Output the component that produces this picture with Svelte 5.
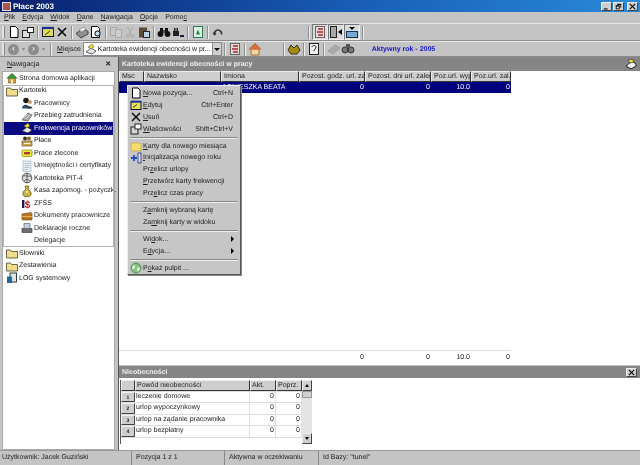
<script>
    const menus = [["Plik", 0], ["Edycja", 0], ["Widok", 0], ["Dane", 0], ["Nawigacja", 0], ["Opcje", 0], ["Pomoc", 4]];

    const columns = [
        { name: "Msc", width: 25 },
        { name: "Nazwisko", width: 77 },
        { name: "Imiona", width: 78 },
        { name: "Pozost. godz. url. zaległ", width: 66 },
        { name: "Pozost. dni url. zaległ", width: 66 },
        { name: "Poz.url. wyp.", width: 40 },
        { name: "Poz.url. zal.u", width: 40 }
    ];

    const treeItems = [
        { label: "Pracownicy", icon: "people" },
        { label: "Przebieg zatrudnienia", icon: "gear" },
        { label: "Frekwencja pracowników", icon: "hand", selected: true },
        { label: "Płace", icon: "money" },
        { label: "Prace zlecone", icon: "note" },
        { label: "Umiejętności i certyfikaty", icon: "doc" },
        { label: "Kartoteka PIT-4", icon: "globe" },
        { label: "Kasa zapomog. - pożyczk.", icon: "bag" },
        { label: "ZFŚS", icon: "dollar" },
        { label: "Dokumenty pracownicze", icon: "case" },
        { label: "Deklaracje roczne", icon: "print" },
        { label: "Delegacje", icon: "" }
    ];

    const reasons = [
        "leczenie domowe",
        "urlop wypoczynkowy",
        "urlop na żądanie pracownika",
        "urlop bezpłatny"
    ];

    const menuGroups = [
        [
            { label: "Nowa pozycja...", u: 0, key: "Ctrl+N", icon: "page" },
            { label: "Edytuj", u: 0, key: "Ctrl+Enter", icon: "edit" },
            { label: "Usuń", u: 0, key: "Ctrl+D", icon: "cross" },
            { label: "Właściwości", u: 0, key: "Shift+Ctrl+V", icon: "props" }
        ],
        [
            { label: "Karty dla nowego miesiąca", u: 0, icon: "folderplain" },
            { label: "Inicjalizacja nowego roku", u: 0, icon: "plus" },
            { label: "Przelicz urlopy", u: 2 },
            { label: "Przetwórz karty frekwencji", u: 0 },
            { label: "Przelicz czas pracy", u: 3 }
        ],
        [
            { label: "Zamknij wybraną kartę", u: 1 },
            { label: "Zamknij karty w widoku", u: 2 }
        ],
        [
            { label: "Widok...", u: 2, arrow: true },
            { label: "Edycja...", u: 1, arrow: true }
        ],
        [
            { label: "Pokaż pulpit ...", u: 1, icon: "desk" }
        ]
    ];
</script>

{#snippet mn(text, at)}{text.slice(0, at)}<u>{text[at]}</u>{text.slice(at + 1)}{/snippet}

{#snippet icon(name)}
    <svg class="ico" viewBox="0 0 12 12" width="12" height="12">
        {#if name === "people"}
            <circle cx="5" cy="3.5" r="2.8" fill="#1c1c1c" /><path d="M1 11.5c0-5 7-5 8 0z" fill="#2a4a6a" /><circle cx="9" cy="5" r="1.9" fill="#c9966a" /><path d="M7 11.5c0-3 3.5-3 4.5 0z" fill="#333" />
        {:else if name === "gear"}
            <path d="M1 10 7 3l4 2-4 6z" fill="#a8a8a8" stroke="#555" stroke-width=".7" /><path d="M3 8l4-4M5 9l4-4" stroke="#eee" stroke-width=".6" />
        {:else if name === "hand"}
            <path d="M1 9 6 5l5 3-4 3z" fill="#e6e6e6" stroke="#222" stroke-width=".7" /><path d="M3 4l4-3 2 3-3 2z" fill="#ead23a" stroke="#443" stroke-width=".5" />
        {:else if name === "money"}
            <rect x="1" y="6" width="10" height="5" fill="#cfa24a" stroke="#542" stroke-width=".6" /><circle cx="4" cy="3.5" r="2" fill="#433" /><circle cx="8" cy="3.5" r="2" fill="#8a6a2a" /><path d="M3 8.5h6" stroke="#fff" />
        {:else if name === "note"}
            <rect x="1" y="3" width="10" height="6.5" rx="1" fill="#eaea40" stroke="#8a8a10" stroke-width=".7" /><rect x="3" y="5" width="6" height="2.4" fill="#a5412c" />
        {:else if name === "doc"}
            <rect x="2" y="1" width="8" height="10.5" fill="#e6edf3" stroke="#8fa3b5" stroke-width=".6" /><path d="M3.5 3.5h5M3.5 5.5h5M3.5 7.5h5M3.5 9.5h3" stroke="#8fa3b5" stroke-width=".6" />
        {:else if name === "globe"}
            <circle cx="6" cy="6" r="4.8" fill="#dcdcdc" stroke="#333" stroke-width=".8" /><path d="M2 4c3-1 6 1 8 0M3 9c2-2 4-2 6 0M6 1v10" stroke="#333" stroke-width=".7" fill="none" />
        {:else if name === "desk"}
            <circle cx="6" cy="6" r="5" fill="#7fc27a" stroke="#3a7a3a" stroke-width=".7" /><path d="M3 3c2 0 3 2 2 3s-3 2-3 1zM7 6c2-1 3 0 3 1s-2 3-3 2z" fill="#e4f2e4" />
        {:else if name === "bag"}
            <path d="M4 1h4L7 4l3 3v3l-2 1.5H4L2 10V7l3-3z" fill="#cdb648" stroke="#5a4a08" stroke-width=".7" /><path d="M5 7h2" stroke="#fff" />
        {:else if name === "dollar"}
            <path d="M1 3h2.4v8H1z" fill="#1d1d50" /><text x="3.8" y="10.5" class="dollar">$</text>
        {:else if name === "case"}
            <path d="M1 4l9-1.5 1 1V10H1z" fill="#b8761e" stroke="#6a4510" stroke-width=".6" /><path d="M1 6.5h10" stroke="#eab052" />
        {:else if name === "print"}
            <rect x="1" y="6.5" width="10" height="4" fill="#6d6d6d" stroke="#333" stroke-width=".6" /><path d="M3 6.5V1.5h6v5z" fill="#bcd0e2" stroke="#456" stroke-width=".6" />
        {:else if name === "home"}
            <path d="M2.5 6v5h7V6z" fill="#d89a3a" stroke="#6a4a1a" stroke-width=".6" /><path d="M.8 6.6 6 1.4l5.2 5.2" fill="#2f9a3a" stroke="#185a20" stroke-width=".8" /><rect x="5" y="7.5" width="2" height="3.5" fill="#fff2c0" />
        {:else if name === "folder"}
            <path d="M.5 3h4l1 1.5h6V11H.5z" fill="#f2dc8c" stroke="#4a4228" stroke-width=".8" />
        {:else if name === "folderplain"}
            <path d="M1 3h9.5l.5 1v7H1z" fill="#f4dc6a" stroke="#b8a040" stroke-width=".6" />
        {:else if name === "log"}
            <rect x="4" y="1" width="6.5" height="9" fill="#e2e2e2" stroke="#123" stroke-width=".9" /><rect x="1" y="4.5" width="5" height="6.5" fill="#1f6a96" />
        {:else if name === "page"}
            <path d="M2.5 1H8l2 2v8H2.5z" fill="#fff" stroke="#000" stroke-width="1" />
        {:else if name === "edit"}
            <rect x="1" y="2.5" width="10" height="8" fill="#e4e25a" stroke="#113" /><path d="M1 2.7h10" stroke="#1a2f96" stroke-width="2" /><path d="M3 8.5l4-3" stroke="#333" />
        {:else if name === "cross"}
            <path d="M2 2l8 8M10 2l-8 8" stroke="#000" stroke-width="1.3" />
        {:else if name === "props"}
            <rect x="1" y="4" width="7" height="7" fill="#d4d4d4" stroke="#222" /><rect x="5" y="1" width="6" height="5" fill="#fff" stroke="#222" />
        {:else if name === "plus"}
            <path d="M1 6h6M4 3v6" stroke="#1550d0" stroke-width="1.8" /><rect x="8" y="1" width="3" height="10" fill="#dde" stroke="#115" stroke-width=".7" />
        {/if}
    </svg>
{/snippet}

{#snippet tool(kind, faded)}
    <svg class="tool" class:faded viewBox="0 0 14 14" width="14" height="14">
        {#if kind === "new"}
            <path d="M3.5 1.5h5l2.5 2.500v8.500H3.500z" fill="#fff" stroke="#000" />
        {:else if kind === "props"}
            <rect x="1.500" y="5.500" width="7" height="7" fill="#ddd" stroke="#222" /><rect x="6.500" y="2.500" width="6" height="5" fill="#fff" stroke="#222" />
        {:else if kind === "edit"}
            <rect x="1.500" y="2.500" width="11" height="9" fill="#dede58" stroke="#113" /><path d="M1 3h12" stroke="#1a2f96" stroke-width="2.200" /><path d="M4 10l5-4" stroke="#333" />
        {:else if kind === "del"}
            <path d="M3 3l8 8M11 3l-8 8" stroke="#000" stroke-width="1.500" />
        {:else if kind === "print"}
            <path d="M1 8.500l7-5 5 3v2.500l-7 4z" fill="#8f8f8f" stroke="#444" /><path d="M4 5l4-3 3 2-4 3z" fill="#eee" stroke="#666" stroke-width=".5" />
        {:else if kind === "preview"}
            <path d="M2.500 1.500h6l2 2v9h-8z" fill="#fff" stroke="#000" /><circle cx="8.500" cy="8.500" r="2.600" fill="#cde" stroke="#000" />
        {:else if kind === "copy"}
            <rect x="1.500" y="2.500" width="6" height="8" fill="#ccc" stroke="#909090" /><rect x="6.500" y="4.500" width="6" height="8" fill="#d8d8d8" stroke="#909090" />
        {:else if kind === "cut"}
            <path d="M4.500 2l4 8M9.500 2l-4 8" stroke="#888" /><circle cx="4.500" cy="11" r="1.500" fill="none" stroke="#888" /><circle cx="9.500" cy="11" r="1.500" fill="none" stroke="#888" />
        {:else if kind === "paste"}
            <rect x="2" y="2.500" width="8" height="10" fill="#5a4a38" /><rect x="6.500" y="6.500" width="6" height="6" fill="#bcd0e8" stroke="#223" />
        {:else if kind === "find"}
            <circle cx="3.500" cy="9" r="2.900" fill="#111" /><circle cx="10.500" cy="9" r="2.900" fill="#111" /><rect x="3" y="3" width="3" height="5" fill="#111" /><rect x="8" y="3" width="3" height="5" fill="#111" /><rect x="6" y="5" width="2" height="3" fill="#555" />
        {:else if kind === "findnext"}
            <path d="M2 6h6v5H2z" fill="#222" /><path d="M3 3h1.500v3H3zM5.500 3H7v3H5.500z" fill="#222" /><path d="M9 11h4" stroke="#124" stroke-width="2" />
        {:else if kind === "refresh"}
            <rect x="2.500" y="1.500" width="9" height="11" fill="#dff0e4" stroke="#2a7a58" /><path d="M5 9.500l2-5 2 5z" fill="#138a40" />
        {:else if kind === "undo"}
            <path d="M3.500 9.500a3.600 3.600 0 1 1 7 0" fill="none" stroke="#333" stroke-width="1.600" /><path d="M1.500 7.500l2 3.500 2-3z" fill="#333" />
        {:else if kind === "red"}
            <rect x="2.500" y="1.500" width="9" height="11" fill="#ddd" stroke="#666" /><path d="M5 4h5M4 7h6M5 10h5" stroke="#b22" stroke-width="1.400" />
        {:else if kind === "split"}
            <rect x="1.500" y="1.500" width="6" height="11" fill="#a8a8a8" stroke="#222" /><path d="M9 7l4-3v6z" fill="#000" />
        {:else if kind === "panel"}
            <rect x="1.500" y="6.500" width="11" height="6" fill="#7fa8d0" stroke="#135" /><path d="M4 2h6l-3 3z" fill="#000" />
        {:else if kind === "home"}
            <path d="M3 7v6h8V7z" fill="#f2d6a8" stroke="#a86a30" /><path d="M1 7.500l6-6 6 6" fill="#d9703a" stroke="#b8542a" />
        {:else if kind === "hands"}
            <path d="M1 8l3-5 3 3 3-3 3 5-3 4H4z" fill="#a88a10" stroke="#332" />
        {:else if kind === "help"}
            <rect x="2.500" y="1.500" width="9" height="11" fill="#eee" stroke="#222" /><path d="M5 5c0-2 4-2 4 0 0 2-2 2-2 4" fill="none" stroke="#222" />
        {:else if kind === "stack"}
            <path d="M1 9l7-6 5 3-7 6z" fill="#8f8f8f" stroke="#777" />
        {:else if kind === "wheels"}
            <circle cx="4" cy="8" r="3" fill="#777" stroke="#333" /><circle cx="10" cy="8" r="3" fill="#777" stroke="#333" /><rect x="5" y="2" width="4" height="4" fill="#555" />
        {/if}
    </svg>
{/snippet}

{#snippet winBtn(kind)}
    <span class="winbtn">
        <svg viewBox="0 0 9 9" width="9" height="9">
            {#if kind === "min"}
                <path d="M1 7h5v1.400H1z" />
            {:else if kind === "max"}
                <path d="M3 1h5v5H7V2.500H3zM1 3h5v5H1zM2 4.500V7h3V4.500z" fill-rule="evenodd" />
            {:else}
                <path d="M1 1l7 7M8 1 1 8" stroke="#000" stroke-width="1.400" />
            {/if}
        </svg>
    </span>
{/snippet}

<div class="app">
    <div class="titlebar">
        <span class="appicon"></span>
        <span class="title">Płace 2003</span>
        <span class="winbtns">
            {@render winBtn("min")}
            {@render winBtn("max")}
            <span class="gap"></span>
            {@render winBtn("close")}
        </span>
    </div>

    <div class="menubar">
        {#each menus as [m, at]}
            <span>{@render mn(m, at)}</span>
        {/each}
    </div>

    <div class="toolbar">
        <span class="grip"></span>
        {@render tool("new")}
        {@render tool("props")}
        <span class="sep"></span>
        {@render tool("edit")}
        {@render tool("del")}
        <span class="sep"></span>
        {@render tool("print")}
        {@render tool("preview")}
        <span class="sep"></span>
        {@render tool("copy", true)}
        {@render tool("cut", true)}
        {@render tool("paste")}
        <span class="sep"></span>
        {@render tool("find")}
        {@render tool("findnext")}
        <span class="sep"></span>
        {@render tool("refresh")}
        <span class="sep"></span>
        {@render tool("undo")}
        <span class="spacer"></span>
        <span class="sep"></span>
        <span class="pressed">{@render tool("red")}</span>
        <span class="pressed">{@render tool("split")}</span>
        <span class="pressed">{@render tool("panel")}</span>
        <span class="sep"></span>
    </div>

    <div class="addressbar">
        <span class="grip"></span>
        <span class="round">‹</span><span class="tiny">▾</span>
        <span class="round">›</span><span class="tiny">▾</span>
        <span class="sep"></span>
        <span class="place"><u>M</u>iejsce</span>
        <div class="combo">
            {@render icon("hand")}
            <span class="combotext">Kartoteka ewidencji obecności w pr...</span>
            <span class="combobtn"></span>
        </div>
        <span class="sep"></span>
        {@render tool("red")}
        <span class="sep"></span>
        {@render tool("home")}
        <span class="sep wide"></span>
        {@render tool("hands")}
        <span class="sep"></span>
        {@render tool("help")}
        <span class="sep"></span>
        {@render tool("stack", true)}
        {@render tool("wheels")}
        <span class="year">Aktywny rok - 2005</span>
    </div>

    <div class="main">
        <aside class="nav">
            <div class="navhead"><span><u>N</u>awigacja</span><b>✕</b></div>
            <div class="tree">
                <div class="rootrow">{@render icon("home")}<span>Strona domowa aplikacji</span></div>
                <div class="group">
                    <div class="rootrow">{@render icon("folder")}<span>Kartoteki</span></div>
                    {#each treeItems as item}
                        <div class="treerow" class:selected={item.selected}>
                            <span class="slot">{#if item.icon}{@render icon(item.icon)}{/if}</span>
                            <span>{item.label}</span>
                        </div>
                    {/each}
                </div>
                <div class="rootrow">{@render icon("folder")}<span>Słowniki</span></div>
                <div class="rootrow">{@render icon("folder")}<span>Zestawienia</span></div>
                <div class="rootrow">{@render icon("log")}<span>LOG systemowy</span></div>
            </div>
        </aside>

        <section class="content">
            <div class="panelhead">
                <span>Kartoteka ewidencji obecności w pracy</span>
                <svg viewBox="0 0 12 12" width="12" height="12"><path d="M1 8l6-5 4 3v2l-5 3z" fill="#eee" stroke="#222" /><path d="M3 2l4-1 2 3-4 1z" fill="#ed4" stroke="#222" stroke-width=".6" /></svg>
            </div>
            <div class="grid">
                <div class="gridrow gridhead">
                    {#each columns as c}
                        <span style="width: {c.width}px">{c.name}</span>
                    {/each}
                </div>
                <div class="gridrow gridsel">
                    <span style="width: {columns[0].width}px"></span>
                    <span style="width: {columns[1].width}px"></span>
                    <span style="width: {columns[2].width}px">AGNIESZKA BEATA</span>
                    <span class="num" style="width: {columns[3].width}px">0</span>
                    <span class="num" style="width: {columns[4].width}px">0</span>
                    <span class="num" style="width: {columns[5].width}px">10.0</span>
                    <span class="num" style="width: {columns[6].width}px">0</span>
                </div>
                <div class="gridfill"></div>
                <div class="gridrow gridfoot">
                    <span style="width: {columns[0].width + columns[1].width + columns[2].width}px"></span>
                    <span class="num" style="width: {columns[3].width}px">0</span>
                    <span class="num" style="width: {columns[4].width}px">0</span>
                    <span class="num" style="width: {columns[5].width}px">10.0</span>
                    <span class="num" style="width: {columns[6].width}px">0</span>
                </div>
            </div>

            <div class="panelhead second">
                <span>Nieobecności</span>
                <span class="winbtn">
                    <svg viewBox="0 0 9 9" width="9" height="9"><path d="M1 1l7 7M8 1 1 8" stroke="#000" stroke-width="1.400" /></svg>
                </span>
            </div>
            <div class="lower">
                <div class="subgrid">
                    <div class="subrows">
                        <div class="subrow subhead">
                            <span class="rowno"></span>
                            <span class="reason">Powód nieobecności</span>
                            <span class="val">Akt.</span>
                            <span class="val">Poprz.</span>
                        </div>
                        {#each reasons as r, i}
                            <div class="subrow">
                                <span class="rowno">{i + 1}</span>
                                <span class="reason">{r}</span>
                                <span class="val num">0</span>
                                <span class="val num">0</span>
                            </div>
                        {/each}
                    </div>
                    <div class="scroll">
                        <span class="sbtn up"></span>
                        <span class="thumb"></span>
                        <span class="track"></span>
                        <span class="sbtn down"></span>
                    </div>
                </div>
            </div>
        </section>
    </div>

    <div class="status">
        <span class="s1">Użytkownik: Jacek Guziński</span>
        <span class="s2">Pozycja 1 z 1</span>
        <span class="s3">Aktywna w oczekiwaniu</span>
        <span class="s4">Id Bazy: "tunel"</span>
    </div>

    <div class="popup">
        {#each menuGroups as group, g}
            {#if g > 0}<div class="msep"></div>{/if}
            {#each group as item}
                <div class="mitem">
                    <span class="mico">{#if item.icon}{@render icon(item.icon)}{/if}</span>
                    <span class="mlabel">{@render mn(item.label, item.u)}</span>
                    {#if item.key}<span class="mkey">{item.key}</span>{/if}
                    {#if item.arrow}<span class="marrow"></span>{/if}
                </div>
            {/each}
        {/each}
    </div>
</div>

<style>
    :global(body) {
        margin: 0;
        background: #c4c4c4;
    }

    .app {
        position: relative;
        width: 640px;
        height: 465px;
        display: flex;
        flex-direction: column;
        overflow: hidden;
        background: #c4c4c4;
        font-family: "Liberation Sans", Arial, sans-serif;
        font-size: 7px;
        color: #222;
        text-rendering: geometricPrecision;
        filter: blur(0.25px);
    }

    u {
        text-underline-offset: 1px;
        text-decoration-thickness: 0.6px;
    }

    .titlebar {
        height: 12px;
        flex: none;
        display: flex;
        align-items: center;
        padding: 0 2px;
        background: linear-gradient(90deg, #08206e, #1a62bc 60%, #2a8ad8);
        color: #fff;
        font-weight: bold;
        font-size: 8px;
    }

    .appicon {
        width: 9px;
        height: 9px;
        margin-right: 2px;
        background: #a55;
        border: 1px solid #ddd;
        box-sizing: border-box;
    }

    .winbtns {
        margin-left: auto;
        display: flex;
        gap: 1px;
    }

    .gap {
        width: 1px;
    }

    .winbtn {
        width: 11px;
        height: 9px;
        display: flex;
        align-items: center;
        justify-content: center;
        background: #d0d0d0;
        border: 1px solid;
        border-color: #eee #444 #444 #eee;
        box-sizing: border-box;
    }

    .winbtn svg {
        width: 7px;
        height: 7px;
    }

    .menubar {
        height: 11px;
        flex: none;
        display: flex;
        align-items: center;
        gap: 7px;
        padding: 0 4px;
    }

    .toolbar,
    .addressbar {
        flex: none;
        display: flex;
        align-items: center;
        padding: 0 0 0 2px;
        box-sizing: border-box;
    }

    .toolbar {
        height: 18px;
        border-top: 1px solid #e8e8e8;
        border-bottom: 1px solid #8e8e8e;
    }

    .addressbar {
        height: 16px;
        border-top: 1px solid #e8e8e8;
        border-bottom: 1px solid #8a8a8a;
    }

    .grip {
        width: 2px;
        height: 12px;
        margin-right: 2px;
        background: #e4e4e4;
        border-right: 1px solid #888;
    }

    .addressbar .grip {
        margin-right: 3px;
    }

    .sep {
        width: 1px;
        height: 13px;
        margin: 0 2px;
        background: #8e8e8e;
        border-right: 1px solid #eee;
    }

    .sep.wide {
        margin-left: 21px;
    }

    .spacer {
        width: 81px;
    }

    .tool {
        flex: none;
    }

    .faded {
        opacity: 0.5;
    }

    .pressed {
        display: flex;
        background: #dcdcdc;
        border: 1px solid;
        border-color: #777 #eee #eee #777;
    }

    .round {
        width: 11px;
        height: 11px;
        border-radius: 50%;
        background: #8c8c8c;
        color: #eee;
        font-size: 9px;
        font-weight: bold;
        line-height: 9px;
        text-align: center;
        box-sizing: border-box;
    }

    .tiny {
        margin: 0 3px;
        font-size: 6px;
        color: #888;
    }

    .place {
        margin: 0 2px 0 3px;
    }

    .combo {
        width: 139px;
        height: 14px;
        flex: none;
        display: flex;
        align-items: center;
        gap: 1px;
        box-sizing: border-box;
        padding-left: 1px;
        background: #fff;
        border: 1px solid #888;
    }

    .combotext {
        flex: 1;
        min-width: 0;
        white-space: nowrap;
        overflow: hidden;
        letter-spacing: -0.06px;
    }

    .combobtn {
        position: relative;
        flex: none;
        width: 9px;
        height: 12px;
        box-sizing: border-box;
        background: #cfcfcf;
        border-left: 1px solid #888;
    }

    .combobtn::after {
        content: "";
        position: absolute;
        left: 1px;
        top: 5px;
        border-top: 3px solid #000;
        border-left: 3px solid transparent;
        border-right: 3px solid transparent;
    }

    .year {
        margin-left: 17px;
        color: #1414c8;
        font-weight: bold;
    }

    .main {
        flex: 1;
        min-height: 0;
        display: flex;
        gap: 3px;
    }

    .nav {
        width: 115px;
        flex: none;
        display: flex;
        flex-direction: column;
    }

    .navhead {
        height: 14px;
        flex: none;
        display: flex;
        align-items: center;
        justify-content: space-between;
        padding: 0 4px 0 7px;
    }

    .navhead b {
        font-size: 7px;
    }

    .tree {
        flex: 1;
        margin-left: 2px;
        background: #fff;
        box-shadow: inset 0 0 0 1px #aaa;
        box-sizing: border-box;
        padding: 1px 1px 0;
    }

    .rootrow,
    .treerow {
        height: 12.5px;
        display: flex;
        align-items: center;
        gap: 1px;
        padding-left: 3px;
        white-space: nowrap;
    }

    .group {
        outline: 1px solid #b4b4b4;
        outline-offset: -1px;
    }

    .treerow {
        padding-left: 18px;
    }

    .treerow.selected {
        background: #0a0a80;
        color: #fff;
    }

    .slot {
        width: 12px;
        height: 12px;
        display: flex;
    }

    .content {
        flex: 1;
        min-width: 0;
        display: flex;
        flex-direction: column;
        border-left: 1px solid #555;
    }

    .panelhead {
        height: 14px;
        flex: none;
        display: flex;
        align-items: center;
        justify-content: space-between;
        padding: 0 3px;
        background: #858585;
        color: #eee;
        font-weight: bold;
    }

    .grid {
        flex: 1;
        min-height: 0;
        display: flex;
        flex-direction: column;
        background: #fff;
    }

    .gridrow {
        display: flex;
        flex: none;
        white-space: nowrap;
    }

    .gridrow span {
        box-sizing: border-box;
        overflow: hidden;
        padding: 0 1px;
    }

    .gridhead {
        height: 11px;
        line-height: 9px;
    }

    .gridhead span {
        padding-left: 2px;
        background: #cecece;
        border: 1px solid;
        border-color: #eee #333 #333 #eee;
    }

    .gridsel {
        height: 11px;
        line-height: 11px;
        background: #00007e;
        color: #fff;
        align-self: flex-start;
    }

    .num {
        text-align: right;
    }

    .gridfill {
        flex: 1;
    }

    .gridfoot {
        height: 14px;
        line-height: 14px;
        border-top: 1px solid #ddd;
        align-self: flex-start;
    }

    .second {
        height: 12px;
        margin-top: 1px;
    }

    .lower {
        height: 72px;
        flex: none;
        padding: 2px 0 0 1px;
        background: #fff;
        box-sizing: border-box;
    }

    .subgrid {
        display: flex;
        width: 192px;
        height: 64px;
        background: #fff;
        border-left: 1px solid #555;
        box-sizing: border-box;
    }

    .subrows {
        flex: 1;
    }

    .subrow {
        height: 10.4px;
        display: flex;
        line-height: 10px;
        border-bottom: 1px solid #ddd;
    }

    .subrow span {
        box-sizing: border-box;
        white-space: nowrap;
        overflow: hidden;
        padding: 0 1px;
    }

    .subhead {
        height: 11px;
        line-height: 9px;
    }

    .subhead span {
        background: #cecece;
        border: 1px solid;
        border-color: #eee #333 #333 #eee;
    }

    .rowno {
        width: 14px;
        text-align: center;
        font-size: 5px;
        font-weight: bold;
        background: #cecece;
        border: 1px solid;
        border-color: #eee #444 #444 #eee;
    }

    .reason {
        width: 115px;
        border-right: 1px solid #ddd;
    }

    .val {
        width: 26px;
        border-right: 1px solid #ddd;
    }

    .scroll {
        width: 10px;
        flex: none;
        display: flex;
        flex-direction: column;
    }

    .sbtn {
        position: relative;
        height: 11px;
        background: #d0d0d0;
        border: 1px solid;
        border-color: #eee #444 #444 #eee;
        box-sizing: border-box;
    }

    .sbtn::after {
        content: "";
        position: absolute;
        left: 1.500px;
        top: 3px;
        border-left: 2.500px solid transparent;
        border-right: 2.500px solid transparent;
    }

    .up::after {
        border-bottom: 3px solid #000;
    }

    .down::after {
        border-top: 3px solid #000;
    }

    .thumb {
        height: 7px;
        background: #d0d0d0;
        border: 1px solid #999;
        box-sizing: border-box;
    }

    .track {
        flex: 1;
        background: #e4e4e4;
    }

    .status {
        height: 15px;
        flex: none;
        display: flex;
        line-height: 13px;
        border-top: 1px solid #999;
        box-sizing: border-box;
    }

    .status span {
        padding-left: 2px;
        border-right: 1px solid #888;
        box-sizing: border-box;
        white-space: nowrap;
    }

    .s1 { width: 132px; }
    .s2 { width: 93px; padding-left: 4px !important; }
    .s3 { width: 94px; padding-left: 4px !important; }
    .s4 { flex: 1; padding-left: 4px !important; border-right: none !important; }

    .popup {
        position: absolute;
        left: 127px;
        top: 85px;
        width: 114px;
        height: 190px;
        box-sizing: border-box;
        padding: 1.500px 1px 0;
        background: #c6c6c6;
        border: 1px solid;
        border-color: #eee #555 #555 #eee;
        box-shadow: 1px 1px 0 #888;
    }

    .mitem {
        height: 11.9px;
        display: flex;
        align-items: center;
        white-space: nowrap;
    }

    .mico {
        width: 14px;
        flex: none;
        display: flex;
        justify-content: center;
    }

    .mlabel {
        flex: 1;
    }

    .mkey {
        margin-right: 6px;
    }

    .marrow {
        width: 0;
        height: 0;
        margin-right: 5px;
        border-left: 3px solid #000;
        border-top: 3px solid transparent;
        border-bottom: 3px solid transparent;
    }

    .msep {
        height: 0;
        margin: 1.500px 1px;
        border-top: 1px solid #888;
        border-bottom: 1px solid #eee;
    }

    .ico {
        flex: none;
    }

    .dollar {
        font: bold 10px "Liberation Sans", sans-serif;
        fill: #c11;
    }
</style>
